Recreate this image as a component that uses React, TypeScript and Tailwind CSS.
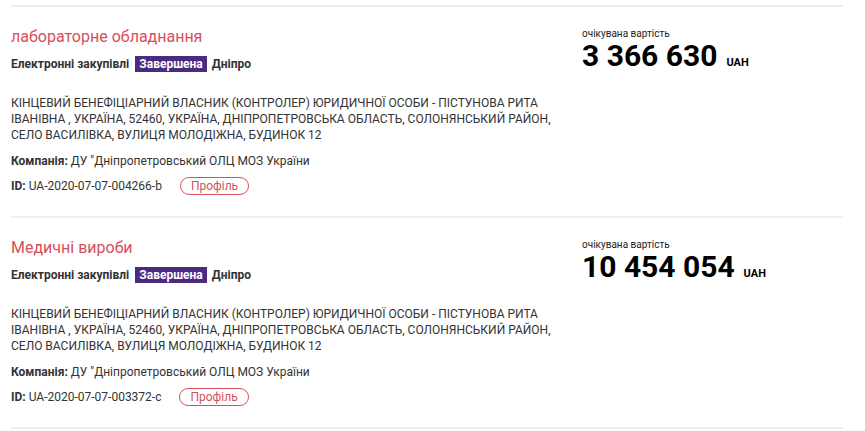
import React from "react";

interface Tender {
  title: string;
  owner: string;
  company: string;
  id: string;
  amount: string;
}

const tenders: Tender[] = [
  {
    title: "лабораторне обладнання",
    owner:
      "КІНЦЕВИЙ БЕНЕФІЦІАРНИЙ ВЛАСНИК (КОНТРОЛЕР) ЮРИДИЧНОЇ ОСОБИ - ПІСТУНОВА РИТА ІВАНІВНА , УКРАЇНА, 52460, УКРАЇНА, ДНІПРОПЕТРОВСЬКА ОБЛАСТЬ, СОЛОНЯНСЬКИЙ РАЙОН, СЕЛО ВАСИЛІВКА, ВУЛИЦЯ МОЛОДІЖНА, БУДИНОК 12",
    company: "ДУ \"Дніпропетровський ОЛЦ МОЗ України",
    id: "UA-2020-07-07-004266-b",
    amount: "3 366 630",
  },
  {
    title: "Медичні вироби",
    owner:
      "КІНЦЕВИЙ БЕНЕФІЦІАРНИЙ ВЛАСНИК (КОНТРОЛЕР) ЮРИДИЧНОЇ ОСОБИ - ПІСТУНОВА РИТА ІВАНІВНА , УКРАЇНА, 52460, УКРАЇНА, ДНІПРОПЕТРОВСЬКА ОБЛАСТЬ, СОЛОНЯНСЬКИЙ РАЙОН, СЕЛО ВАСИЛІВКА, ВУЛИЦЯ МОЛОДІЖНА, БУДИНОК 12",
    company: "ДУ \"Дніпропетровський ОЛЦ МОЗ України",
    id: "UA-2020-07-07-003372-c",
    amount: "10 454 054",
  },
];

function TenderItem({ t }: { t: Tender }) {
  return (
    <div className="border-t-2 border-[#eeeeee] flex h-[211px] pt-[20px]">
      <div className="w-[571px]">
        <a className="block text-[16px] leading-[20px] text-[#d6505c]">{t.title}</a>
        <div className="mt-[8px] flex items-center gap-[5px] text-[12px] font-bold text-[#333333]">
          <span>Електронні закупівлі</span>
          <span className="bg-[#4b2a82] text-white px-[4px] leading-[16px] ml-[1px]">Завершена</span>
          <span>Дніпро</span>
        </div>
        <p className="mt-[22px] text-[12px] leading-[16px] text-[#333333] w-[545px]">{t.owner}</p>
        <div className="mt-[10px] text-[12px] leading-[16px] text-[#333333]">
          <b>Компанія:</b> {t.company}
        </div>
        <div className="mt-[8px] flex items-center text-[12px] leading-[16px] text-[#333333]">
          <span>
            <b>ID:</b> {t.id}
          </span>
          <button className="ml-[18px] border border-[#d6505c] text-[#d6505c] rounded-full px-[10px] leading-[16px] h-[18px] text-[12px]">
            Профіль
          </button>
        </div>
      </div>
      <div className="pt-[1px]">
        <div className="text-[10px] leading-[12px] text-[#222222]">очікувана вартість</div>
        <div className="flex items-baseline gap-[9px] text-black font-bold">
          <span className="text-[30px] leading-[32px]">{t.amount}</span>
          <span className="text-[11px]">UAH</span>
        </div>
      </div>
    </div>
  );
}

export default function App() {
  return (
    <div className="bg-white h-[431px] overflow-hidden pt-[5px] font-['Roboto',sans-serif]">
      <div className="mx-[11px] w-[832px]">
        {tenders.map((t) => (
          <TenderItem key={t.id} t={t} />
        ))}
        <div className="border-t-2 border-[#eeeeee]" />
      </div>
    </div>
  );
}
